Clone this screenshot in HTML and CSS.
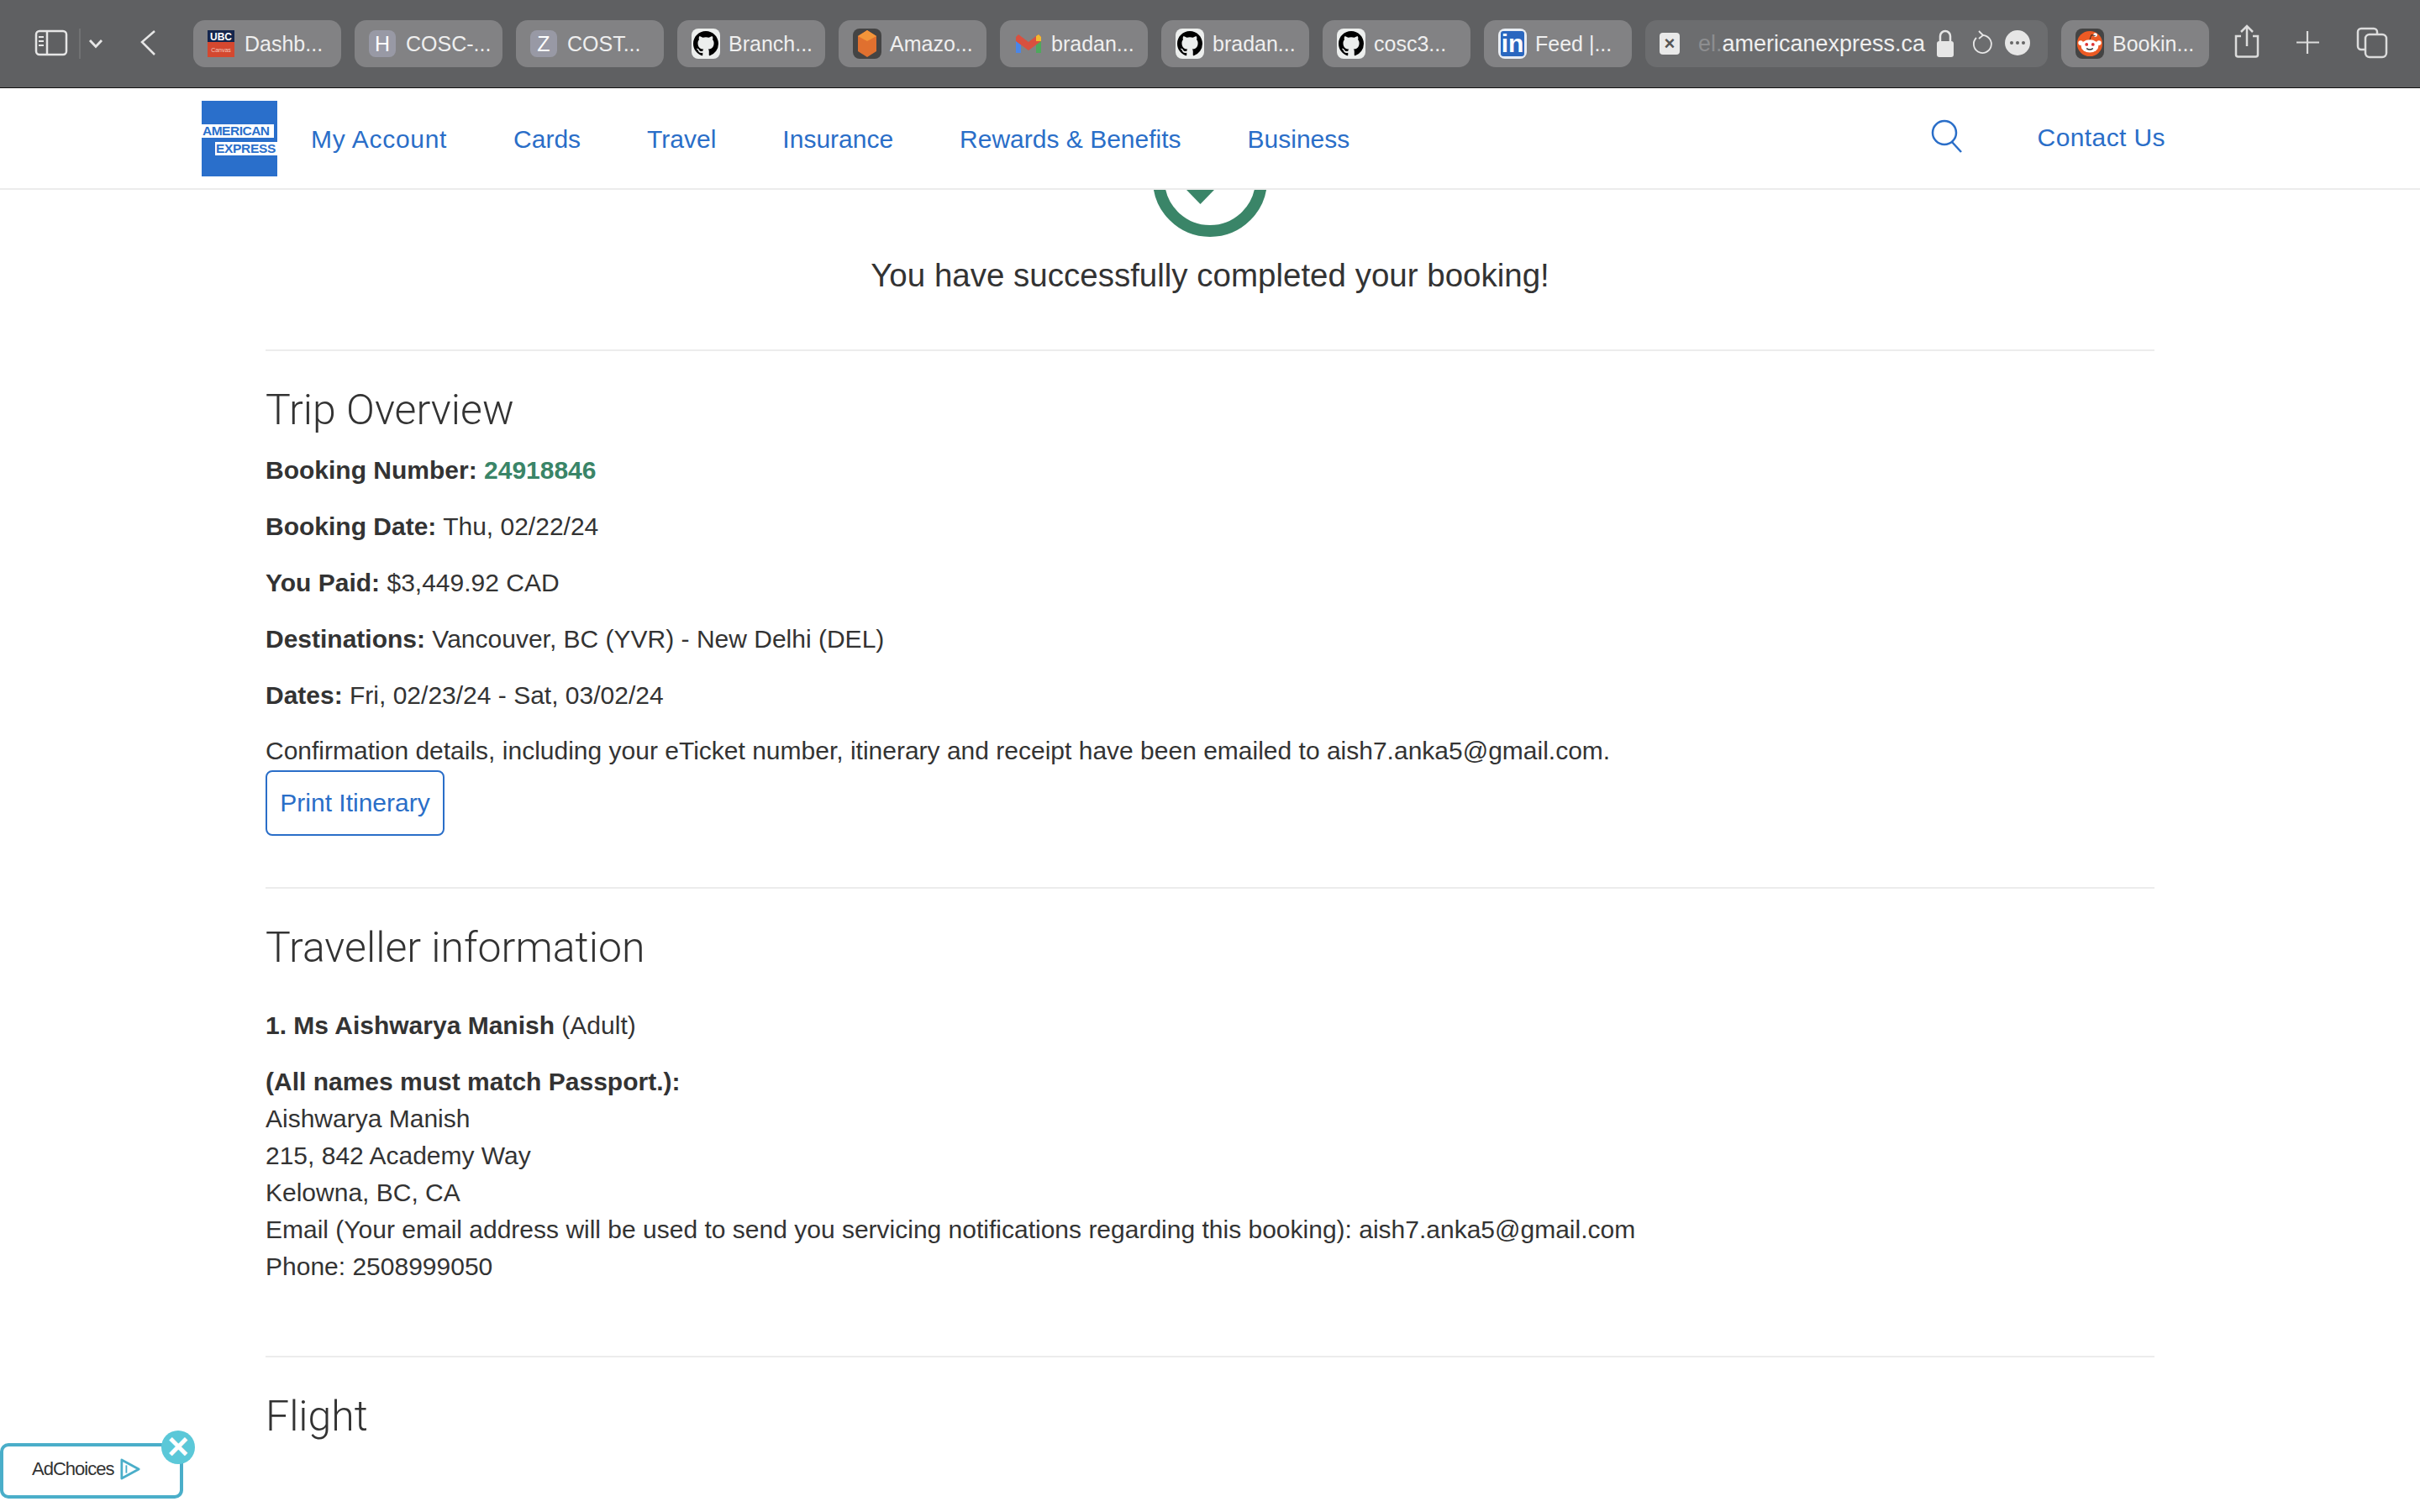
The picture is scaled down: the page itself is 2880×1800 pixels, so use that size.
FILE: index.html
```html
<!DOCTYPE html>
<html lang="en">
<head>
    <meta charset="UTF-8">
    <title>Booking confirmation</title>
    <link rel="stylesheet" href="styles.css">
</head>
<body>
    <svg class="defs" width="0" height="0">
        <symbol id="gh" viewBox="0 0 16 16">
            <path d="M8 0C3.58 0 0 3.58 0 8c0 3.54 2.29 6.53 5.47 7.59.4.07.55-.17.55-.38 0-.19-.01-.82-.01-1.49-2.01.37-2.53-.49-2.69-.94-.09-.23-.48-.94-.82-1.13-.28-.15-.68-.52-.01-.53.63-.01 1.08.58 1.23.82.72 1.21 1.87.87 2.33.66.07-.52.28-.87.51-1.07-1.78-.2-3.64-.89-3.64-3.95 0-.87.31-1.59.82-2.15-.08-.2-.36-1.02.08-2.12 0 0 .67-.21 2.2.82.64-.18 1.32-.27 2-.27.68 0 1.36.09 2 .27 1.53-1.04 2.2-.82 2.2-.82.44 1.1.16 1.92.08 2.12.51.56.82 1.27.82 2.15 0 3.07-1.87 3.75-3.65 3.95.29.25.54.73.54 1.48 0 1.07-.01 1.93-.01 2.2 0 .21.15.46.55.38A8.013 8.013 0 0016 8c0-4.42-3.58-8-8-8z"/>
        </symbol>
    </svg>

    <!-- browser toolbar -->
    <header class="toolbar">
        <svg class="tool-left" width="189" height="56" viewBox="0 0 189 56" fill="none" stroke="#e6e6e6">
            <rect x="2" y="11" width="36" height="28" rx="4" stroke-width="2.5"/>
            <path d="M15 11v28" stroke-width="2.5"/>
            <path d="M5 18h6M5 23h6M5 28h6" stroke-width="2"/>
            <path d="M54 8v36" stroke="#77787a" stroke-width="1.5"/>
            <path d="M66 22l7 7.500 7-7.500" stroke-width="2.800"/>
            <path d="M143 11l-15 13 15 15" stroke-width="2.500"/>
        </svg>
        <div class="tabs">
            <div class="tab"><span class="fav ubc"><b>UBC</b><i>Canvas</i></span>Dashb...</div>
            <div class="tab"><span class="fav letter">H</span>COSC-...</div>
            <div class="tab"><span class="fav letter">Z</span>COST...</div>
            <div class="tab"><span class="fav gh"><svg width="30" height="30"><use href="#gh"/></svg></span>Branch...</div>
            <div class="tab"><span class="fav amazon"><svg width="24" height="34" viewBox="0 0 24 34"><path d="M12 1l11 7v18l-11 7-11-7V8z" fill="#e0702f"/><path d="M12 1l11 7-11 6-11-6z" fill="#f2953a"/></svg></span>Amazo...</div>
            <div class="tab"><span class="fav gmail"><svg width="30" height="22" viewBox="0 0 30 22"><path d="M0 3h6v19H0z" fill="#4a86e8"/><path d="M24 8h6v14h-6z" fill="#4ea85c"/><path d="M0 3l3-3 12 9 9-7 3-2 3 3v5l-15 11L0 8z" fill="#d9503f"/><path d="M24 2l3-2 3 3v5h-6z" fill="#f2b92f"/></svg></span>bradan...</div>
            <div class="tab"><span class="fav gh"><svg width="30" height="30"><use href="#gh"/></svg></span>bradan...</div>
            <div class="tab"><span class="fav gh"><svg width="30" height="30"><use href="#gh"/></svg></span>cosc3...</div>
            <div class="tab"><span class="fav linkedin"><span>in</span></span>Feed |...</div>
            <div class="tab tab-url">
                <span class="fav close-tile">×</span>
                <span class="url"><span class="url-fade">el.</span>americanexpress.ca</span>
                <svg class="url-icons" width="114" height="36" viewBox="0 0 114 36">
                    <rect x="2" y="15" width="20" height="19" rx="3" fill="#e6e6e6"/>
                    <path d="M6 16v-7a6 6 0 0 1 12 0v7" fill="none" stroke="#e6e6e6" stroke-width="2.500"/>
                    <path d="M57 8a10.500 10.500 0 1 1-8 3" fill="none" stroke="#e6e6e6" stroke-width="1.800"/>
                    <path d="M52 3l5 5-5 4" fill="none" stroke="#e6e6e6" stroke-width="1.800"/>
                    <circle cx="98" cy="17" r="15" fill="#e6e6e6"/>
                    <circle cx="91" cy="17" r="2" fill="#666"/><circle cx="98" cy="17" r="2" fill="#666"/><circle cx="105" cy="17" r="2" fill="#666"/>
                </svg>
            </div>
            <div class="tab"><span class="fav reddit"><svg width="36" height="36" viewBox="0 0 36 36"><circle cx="18" cy="18" r="16" fill="#ec5a24"/><ellipse cx="18" cy="21" rx="11" ry="8" fill="#fff"/><circle cx="6.500" cy="17" r="3" fill="#fff"/><circle cx="29.500" cy="17" r="3" fill="#fff"/><circle cx="25" cy="7" r="2.500" fill="#fff"/><path d="M18 13l2-6 5 1" fill="none" stroke="#222" stroke-width="1"/><circle cx="14" cy="19" r="2" fill="#d33"/><circle cx="22" cy="19" r="2" fill="#d33"/><path d="M14 24q4 3 8 0" fill="none" stroke="#333" stroke-width="1.500"/></svg></span>Bookin...</div>
        </div>
        <svg class="tool-right" width="190" height="56" viewBox="0 0 190 56" fill="none" stroke="#dcdcdc" stroke-width="2.500">
            <path d="M8 18H2v22a2.500 2.500 0 0 0 2.500 2.500h21A2.500 2.500 0 0 0 28 40V18h-6"/>
            <path d="M15 30V7M8 13l7-7 7 7"/>
            <path d="M87 12v27M74 25.500h27" stroke-width="2.200"/>
            <path d="M155 34h-4a4 4 0 0 1-4-4V13a4 4 0 0 1 4-4h15a4 4 0 0 1 4 4v3"/>
            <rect x="156" y="16" width="25" height="27" rx="5"/>
        </svg>
    </header>

    <!-- site nav -->
    <nav class="site-nav">
        <div class="amex-logo">
            <span class="amex-line">AMERICAN</span>
            <span class="amex-line amex-line2">EXPRESS</span>
        </div>
        <ul class="nav-links">
            <li class="nav-first"><a>My Account</a></li>
            <li><a>Cards</a></li>
            <li><a>Travel</a></li>
            <li><a>Insurance</a></li>
            <li><a>Rewards &amp; Benefits</a></li>
            <li><a>Business</a></li>
        </ul>
        <svg class="search-icon" width="40" height="40" viewBox="0 0 40 40" fill="none" stroke="#2a6ec8" stroke-width="2.500">
            <circle cx="16" cy="16" r="14"/>
            <path d="M25 27l11 12"/>
        </svg>
        <a class="contact">Contact Us</a>
    </nav>

    <main class="content">
        <section class="success">
            <svg class="check" width="136" height="56" viewBox="0 0 136 56">
                <circle cx="68" cy="-12" r="61" fill="none" stroke="#3a8568" stroke-width="14"/>
                <path d="M40 0h33l-16.500 17z" fill="#3a8568"/>
            </svg>
            <p class="success-text">You have successfully completed your booking!</p>
        </section>

        <section class="block block-trip">
            <h2>Trip Overview</h2>
            <p><b>Booking Number:</b> <b class="green">24918846</b></p>
            <p><b>Booking Date:</b> Thu, 02/22/24</p>
            <p><b>You Paid:</b> $3,449.92 CAD</p>
            <p><b>Destinations:</b> Vancouver, BC (YVR) - New Delhi (DEL)</p>
            <p><b>Dates:</b> Fri, 02/23/24 - Sat, 03/02/24</p>
            <div class="confirm">Confirmation details, including your eTicket number, itinerary and receipt have been emailed to aish7.anka5@gmail.com.</div>
            <button class="print-btn">Print Itinerary</button>
        </section>

        <section class="block block-traveller">
            <h2>Traveller information</h2>
            <p class="name"><b>1. Ms Aishwarya Manish</b> (Adult)</p>
            <div class="address">
                <b>(All names must match Passport.):</b><br>
                Aishwarya Manish<br>
                215, 842 Academy Way<br>
                Kelowna, BC, CA<br>
                Email (Your email address will be used to send you servicing notifications regarding this booking): aish7.anka5@gmail.com<br>
                Phone: 2508999050
            </div>
        </section>

        <section class="block">
            <h2>Flight</h2>
        </section>
    </main>

    <!-- ad badge, sits over the page -->
    <div class="adchoices">
        <span class="ad-text">AdChoices</span>
        <svg width="24" height="28" viewBox="0 0 26 28" fill="none" stroke="#4aaec9" stroke-width="3">
            <path d="M2 2l22 12L2 26z" stroke-linejoin="round"/>
            <path d="M8 9v10" stroke-width="2"/>
        </svg>
        <span class="ad-close">×</span>
    </div>
</body>
</html>
```

FILE: styles.css
```css
* {
    box-sizing: border-box;
}

html, body {
    margin: 0;
    height: 1800px;
    overflow: hidden;
}

body {
    position: relative;
    background: #fff;
    color: #333;
    font-family: "Liberation Sans", Arial, sans-serif;
    font-size: 30px;
    line-height: 44px;
}

.defs {
    position: absolute;
}

/* toolbar */
.toolbar {
    height: 105px;
    background: #5f6062;
    border-bottom: 1px solid #111;
    display: flex;
    align-items: flex-start;
    padding-left: 41px;
}

.tool-left {
    margin-top: 26px;
    flex: none;
}

.tool-right {
    flex: none;
    margin-left: 30px;
    margin-top: 25px;
}

.tabs {
    display: flex;
    gap: 16px;
    margin-top: 24px;
}

.tab {
    width: 176px;
    height: 56px;
    background: #828284;
    border-radius: 14px;
    display: flex;
    align-items: center;
    padding-left: 17px;
    gap: 10px;
    color: #efefef;
    font-size: 25px;
    white-space: nowrap;
}

.tab-url {
    width: 479px;
    background: #6c6d6f;
    gap: 22px;
}

.url {
    font-size: 27px;
}

.url-fade {
    color: #8d8e90;
}

.tab-url .url-icons {
    flex: none;
    margin-left: -10px;
}

.fav {
    flex: none;
    width: 34px;
    height: 36px;
    border-radius: 8px;
    display: flex;
    align-items: center;
    justify-content: center;
}

.ubc {
    width: 32px;
    height: 32px;
    margin-right: 2px;
    border-radius: 0;
    flex-direction: column;
    background: linear-gradient(#14264d 45%, #d4482f 45%);
    line-height: 15px;
    color: #fff;
}

.ubc b {
    font-size: 12px;
}

.ubc i {
    font-style: normal;
    font-size: 7px;
    color: #f3c9bf;
}

.letter {
    background: #9899a5;
    color: #fff;
    font-size: 25px;
    width: 32px;
    height: 32px;
    margin-right: 2px;
}

.gh {
    background: #eceeed;
}

.amazon {
    background: #444;
}

.gmail {
    background: transparent;
}

.linkedin {
    background: #e9edf3;
    padding: 3px;
}

.linkedin span {
    display: block;
    width: 100%;
    height: 100%;
    background: #2a67bf;
    border-radius: 3px;
    color: #fff;
    font-size: 30px;
    font-weight: bold;
    line-height: 30px;
    text-align: center;
}

.close-tile {
    width: 24px;
    height: 26px;
    border-radius: 4px;
    background: #e9e9e9;
    color: #555;
    font-size: 22px;
    font-weight: bold;
    line-height: 26px;
}

.reddit {
    background: #444;
}

/* nav */
.site-nav {
    height: 121px;
    display: flex;
    align-items: center;
    padding-left: 240px;
    border-bottom: 2px solid #ececec;
    color: #2a6ec8;
}

.amex-logo {
    flex: none;
    width: 90px;
    height: 90px;
    background: #2a6fcb;
    display: flex;
    flex-direction: column;
    gap: 5px;
    padding-top: 28px;
    font-weight: bold;
    font-size: 15.5px;
    line-height: 16px;
    color: #2a6fcb;
}

.amex-line {
    background: #fff;
    width: 86px;
    height: 16px;
    padding-left: 1px;
    letter-spacing: -0.5px;
    white-space: nowrap;
}

.amex-line2 {
    width: 74px;
    margin-left: 16px;
    letter-spacing: -0.3px;
}

.nav-links {
    display: flex;
    gap: 79px;
    list-style: none;
    margin: 3px 0 0 40px;
    padding: 0;
    flex: 1;
    line-height: 44px;
}

.nav-first {
    letter-spacing: 0.7px;
}

.search-icon {
    flex: none;
    margin-right: 87px;
    margin-top: -5px;
}

.contact {
    margin-right: 303px;
    margin-top: -1px;
    letter-spacing: 0.4px;
}

/* content */
.content {
    padding: 0 316px;
}

.success {
    text-align: center;
    height: 190px;
    overflow: hidden;
}

.check {
    display: block;
    margin: 0 auto;
}

.success-text {
    margin: 23px 0 0;
    font-size: 38.5px;
    line-height: 46px;
}

.block {
    border-top: 2px solid #ececec;
    padding-top: 40px;
}

.block-trip {
    padding-bottom: 61px;
}

.block-traveller {
    padding-bottom: 84px;
}

h2 {
    margin: 0 0 20px;
    font-family: Roboto, "Liberation Sans", sans-serif;
    font-weight: 300;
    font-size: 50px;
    line-height: 60px;
    color: #333;
}

p {
    margin: 0 0 23px;
}

.green {
    color: #3a8568;
}

.confirm {
    margin-top: -1px;
    height: 45px;
}

.print-btn {
    display: block;
    width: 213px;
    height: 78px;
    padding: 0;
    background: #fff;
    border: 2px solid #2a6ec8;
    border-radius: 8px;
    color: #2a6ec8;
    font: inherit;
}

.name {
    margin-top: 41px;
}

/* ad badge */
.adchoices {
    position: absolute;
    left: 0;
    top: 1718px;
    width: 218px;
    height: 66px;
    background: #fff;
    border: 4px solid #4aaec9;
    border-radius: 10px;
    display: flex;
    align-items: center;
    gap: 8px;
    padding-left: 34px;
    padding-bottom: 4px;
}

.ad-text {
    font-size: 22px;
    letter-spacing: -1px;
    color: #333;
}

.ad-close {
    position: absolute;
    right: -18px;
    top: -19px;
    width: 40px;
    height: 40px;
    border-radius: 50%;
    background: #5bc8d8;
    color: #fff;
    font-size: 44px;
    font-weight: bold;
    line-height: 38px;
    text-align: center;
}
```
